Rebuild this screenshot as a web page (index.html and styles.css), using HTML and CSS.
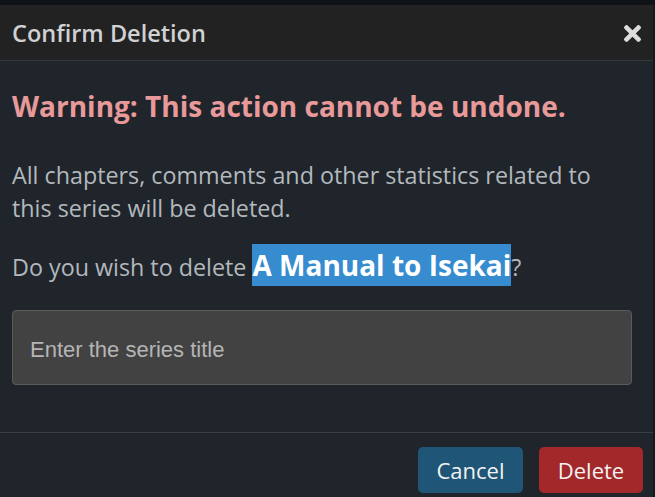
FILE: index.html
```html
<!DOCTYPE html>
<html>
<head>
<meta charset="utf-8">
<link rel="stylesheet" href="styles.css">
</head>
<body>
<div class="modal">
  <div class="modal-header">
    <h5 class="modal-title">Confirm Deletion</h5>
    <span class="close"><svg class="close-icon" viewBox="0 80 352 352" width="17" height="17"><path fill="currentColor" d="M242.72 256l100.07-100.07c12.28-12.28 12.28-32.19 0-44.48l-22.24-22.24c-12.28-12.28-32.19-12.28-44.48 0L176 189.280 75.930 89.210c-12.280-12.280-32.190-12.280-44.480 0L9.21 111.45c-12.28 12.28-12.28 32.19 0 44.48L109.28 256 9.21 356.07c-12.28 12.28-12.28 32.19 0 44.48l22.24 22.24c12.28 12.28 32.2 12.28 44.48 0L176 322.72l100.07 100.07c12.28 12.28 32.2 12.28 44.48 0l22.24-22.24c12.28-12.28 12.28-32.19 0-44.48L242.72 256z"/></svg></span>
  </div>
  <div class="modal-body">
    <h4 class="warning">Warning: This action cannot be undone.</h4>
    <p class="text">All chapters, comments and other statistics related to this series will be deleted.</p>
    <p class="text ask">Do you wish to delete <span class="hl">A Manual to Isekai</span>?</p>
    <input class="field" type="text" placeholder="Enter the series title">
  </div>
  <div class="modal-footer">
    <button class="btn cancel">Cancel</button>
    <button class="btn delete">Delete</button>
  </div>
</div>
</body>
</html>
```
FILE: styles.css
```css
html, body {
  margin: 0;
  padding: 0;
  background: #0f1317;
  height: 100%;
  overflow: hidden;
}
.modal {
  margin-top: 5px;
  background: #20252b;
  font-family: "Open Sans", "Noto Sans", sans-serif;
  border-right: 2px solid #15191d;
  min-height: 492px;
}
.modal-header {
  height: 56px;
  box-sizing: border-box;
  background: #222222;
  border-bottom: 1px solid #33393f;
  display: flex;
  align-items: center;
  justify-content: space-between;
  padding: 0 12px 0 12px;
}
.modal-title {
  margin: 0;
  font-size: 23.5px;
  font-weight: 600;
  color: #cfd1d3;
}
.close {
  color: #dcdcdc;
  display: flex;
  margin-top: 2px;
}
.close-icon {
  display: block;
}
.modal-body {
  padding: 28px 21px 47px 12px;
}
.warning {
  margin: 0 0 36px 0;
  font-size: 28px;
  font-weight: 700;
  color: #e8999a;
  line-height: 34px;
}
.text {
  margin: 0 0 19px 0;
  font-size: 23.3px;
  line-height: 33px;
  color: #b3b8bd;
}
.ask {
  margin-bottom: 24px;
}
.hl {
  display: inline-block;
  background: #368ccf;
  color: #ffffff;
  font-weight: 700;
  font-size: 28px;
  line-height: 42px;
}
.field {
  display: block;
  width: 100%;
  box-sizing: border-box;
  height: 75px;
  background: #424242;
  border: 1px solid #5b5b5b;
  border-radius: 4px;
  padding: 4px 17px 0;
  font-family: "Liberation Sans", Arial, sans-serif;
  font-size: 22px;
  color: #ddd;
  outline: none;
}
.field::placeholder {
  color: #b5b5b5;
}
.modal-footer {
  border-top: 1px solid #393f45;
  display: flex;
  justify-content: flex-end;
  gap: 16px;
  padding: 14px 10px 14px 12px;
}
.btn {
  font-family: "Open Sans", "Noto Sans", sans-serif;
  font-size: 22px;
  color: #f2f2f2;
  border: none;
  border-radius: 5px;
  height: 46px;
  padding: 0;
}
.cancel {
  background: #1f5577;
  width: 105px;
}
.delete {
  background: #a3282a;
  width: 104px;
}
```
